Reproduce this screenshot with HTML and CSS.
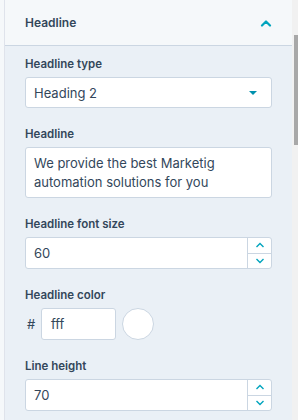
FILE: index.html
```html
<!DOCTYPE html>
<html lang="en">
<head>
    <meta charset="UTF-8">
    <meta name="viewport" content="width=device-width, initial-scale=1.0">
    <title>Headline settings</title>
    <link rel="stylesheet" href="styles.css">
</head>
<body>
    <div class="frame">
        <div class="panel">
            <div class="panel-header">
                <span class="panel-title">Headline</span>
                <svg class="chevron" width="12" height="8" viewBox="0 0 12 8">
                    <path d="M2 6.5 L6 2.5 L10 6.5" fill="none" stroke="#00a4bd" stroke-width="2.2" stroke-linecap="round" stroke-linejoin="round"/>
                </svg>
            </div>
            <div class="panel-body">
                <div class="field">
                    <label>Headline type</label>
                    <div class="select">
                        <span>Heading 2</span>
                        <svg width="10" height="6" viewBox="0 0 10 6"><path d="M1 1 L9 1 L5 5 Z" fill="#0091ae"/></svg>
                    </div>
                </div>
                <div class="field">
                    <label>Headline</label>
                    <div class="textarea">We provide the best Marketig automation solutions for you</div>
                </div>
                <div class="field">
                    <label>Headline font size</label>
                    <div class="number">
                        <span class="number-value">60</span>
                        <div class="spin">
                            <div class="spin-btn">
                                <svg width="10" height="6" viewBox="0 0 10 6"><path d="M1.5 5 L5 1.5 L8.5 5" fill="none" stroke="#00a4bd" stroke-width="1.4"/></svg>
                            </div>
                            <div class="spin-btn">
                                <svg width="10" height="6" viewBox="0 0 10 6"><path d="M1.5 1 L5 4.5 L8.5 1" fill="none" stroke="#00a4bd" stroke-width="1.4"/></svg>
                            </div>
                        </div>
                    </div>
                </div>
                <div class="field">
                    <label>Headline color</label>
                    <div class="color-row">
                        <span class="hash">#</span>
                        <div class="color-input">fff</div>
                        <div class="swatch"></div>
                    </div>
                </div>
                <div class="field">
                    <label>Line height</label>
                    <div class="number">
                        <span class="number-value">70</span>
                        <div class="spin">
                            <div class="spin-btn">
                                <svg width="10" height="6" viewBox="0 0 10 6"><path d="M1.5 5 L5 1.5 L8.5 5" fill="none" stroke="#00a4bd" stroke-width="1.4"/></svg>
                            </div>
                            <div class="spin-btn">
                                <svg width="10" height="6" viewBox="0 0 10 6"><path d="M1.5 1 L5 4.5 L8.5 1" fill="none" stroke="#00a4bd" stroke-width="1.4"/></svg>
                            </div>
                        </div>
                    </div>
                </div>
            </div>
        </div>
        <div class="scrollbar">
            <div class="thumb"></div>
        </div>
    </div>
</body>
</html>
```

FILE: styles.css
```css
body {
    margin: 0;
    font-family: Inter, "Noto Sans", sans-serif;
    color: #33475b;
    background-color: #f5f8fa;
    height: 420px;
    overflow: hidden;
}

.frame {
    display: flex;
    height: 420px;
    padding-left: 4px;
}

.panel {
    flex: 1;
    border-left: 1px solid #dfe3eb;
    background-color: #eaf0f6;
}

.panel-header {
    height: 45px;
    display: flex;
    align-items: center;
    justify-content: space-between;
    padding: 0 20px 0 20px;
    background-color: #f5f8fa;
    border-bottom: 1px solid #cbd6e2;
}

.panel-title {
    font-size: 12px;
    font-weight: 600;
}

.panel-body {
    padding: 11px 20px 0 20px;
}

.field {
    margin-bottom: 19px;
}

label {
    display: block;
    font-size: 11.5px;
    line-height: 14px;
    font-weight: 600;
    margin-bottom: 6px;
}

.select, .textarea, .number, .color-input {
    background-color: #fff;
    border: 1px solid #cbd6e2;
    border-radius: 3px;
    font-size: 13px;
    box-sizing: border-box;
}

.select {
    height: 31px;
    display: flex;
    align-items: center;
    justify-content: space-between;
    padding: 0 13px 0 8px;
}

.textarea {
    height: 51px;
    padding: 6px 8px;
    line-height: 19px;
}

.number {
    height: 32px;
    display: flex;
    align-items: center;
    padding-left: 8px;
}

.number-value {
    flex: 1;
}

.spin {
    width: 23px;
    height: 100%;
    border-left: 1px solid #cbd6e2;
    display: flex;
    flex-direction: column;
}

.spin-btn {
    flex: 1;
    display: flex;
    align-items: center;
    justify-content: center;
}

.spin-btn + .spin-btn {
    border-top: 1px solid #cbd6e2;
}

.color-row {
    display: flex;
    align-items: center;
}

.hash {
    font-size: 13px;
    width: 14px;
    padding-left: 2px;
}

.color-input {
    width: 75px;
    height: 32px;
    display: flex;
    align-items: center;
    padding-left: 9px;
}

.swatch {
    width: 32px;
    height: 32px;
    border-radius: 50%;
    background-color: #fff;
    border: 1px solid #cbd6e2;
    box-sizing: border-box;
    margin-left: 6px;
}

.scrollbar {
    width: 6px;
    background-color: #f1f1f1;
    padding-top: 35px;
}

.thumb {
    width: 4px;
    margin-left: 2px;
    height: 110px;
    background-color: #a8a8a8;
}
```
